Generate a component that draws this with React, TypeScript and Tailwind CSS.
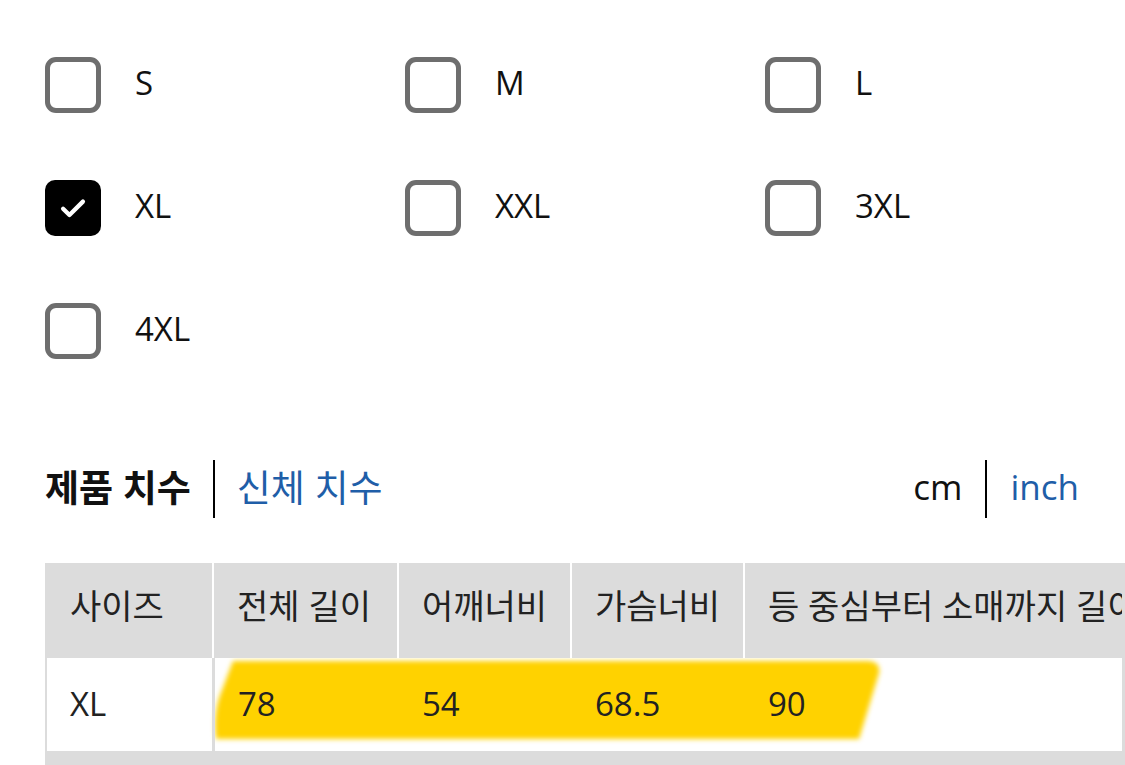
import React from 'react';

const sizes = [
  { label: 'S', checked: false },
  { label: 'M', checked: false },
  { label: 'L', checked: false },
  { label: 'XL', checked: true },
  { label: 'XXL', checked: false },
  { label: '3XL', checked: false },
  { label: '4XL', checked: false },
];

const columns = [
  { title: '사이즈', value: 'XL', width: 'w-[165px]' },
  { title: '전체 길이', value: '78', width: 'w-[185px]' },
  { title: '어깨너비', value: '54', width: 'w-[173px]' },
  { title: '가슴너비', value: '68.5', width: 'w-[173px]' },
  { title: '등 중심부터 소매까지 길이', value: '90', width: 'w-[460px]' },
];

function Checkbox({ checked }: { checked: boolean }) {
  if (checked) {
    return (
      <div className="w-[56px] h-[56px] rounded-[10px] bg-black flex items-center justify-center shrink-0">
        <svg width="34" height="34" viewBox="0 0 24 24" fill="none">
          <path d="M5 12.5l4.5 4.5 9.5-9.5" stroke="white" strokeWidth="3" strokeLinecap="round" strokeLinejoin="round" />
        </svg>
      </div>
    );
  }
  return <div className="w-[56px] h-[56px] rounded-[11px] border-[5px] border-[#6e6e6e] bg-white shrink-0" />;
}

export default function App() {
  return (
    <div
      className="w-[1125px] h-[765px] overflow-hidden bg-white text-[#111]"
      style={{ fontFamily: '"Open Sans", "Noto Sans CJK KR", sans-serif' }}
    >
      {/* Size options */}
      <div className="grid grid-cols-[360px_360px_360px] gap-y-[67px] pl-[45px] pt-[57px]">
        {sizes.map((s) => (
          <div key={s.label} className="flex items-center gap-[34px] h-[56px]">
            <Checkbox checked={s.checked} />
            <span className="text-[33px] leading-none -mt-[6px]">{s.label}</span>
          </div>
        ))}
      </div>

      {/* Tabs */}
      <div className="flex items-center justify-between pl-[45px] pr-[46px] mt-[101px] h-[58px]">
        <div className="flex items-center">
          <span className="text-[37px] font-bold leading-none -mt-[4px]">제품 치수</span>
          <span className="w-[2px] h-[58px] bg-black mx-[22px]" />
          <span className="text-[37px] leading-none text-[#1f5ea8] -mt-[4px]">신체 치수</span>
        </div>
        <div className="flex items-center">
          <span className="text-[35px] leading-none -mt-[6px]">cm</span>
          <span className="w-[2px] h-[58px] bg-black mx-[23px]" />
          <span className="text-[35px] leading-none text-[#1f5ea8] -mt-[6px]">inch</span>
        </div>
      </div>

      {/* Size table */}
      <div className="ml-[45px] mt-[45px] bg-[#dcdcdc] pl-[2px] pr-[3px] h-[210px]">
        <div className="overflow-hidden">
          <div className="flex w-[1300px] h-[95px]">
            {columns.map((c, i) => (
              <div
                key={c.title}
                className={`${c.width} shrink-0 flex items-center pl-[23px] text-[34px] text-[#222] whitespace-nowrap ${i > 0 ? 'border-l-2 border-white' : ''}`}
              >
                <span className="-mt-[8px]">{c.title}</span>
              </div>
            ))}
          </div>
          <div className="relative flex w-[1300px] h-[93px] bg-white">
            <svg className="absolute left-0 top-0" width="900" height="93" viewBox="0 0 900 93">
              <defs>
                <filter id="blur" x="-5%" y="-20%" width="110%" height="140%">
                  <feGaussianBlur stdDeviation="2.6" />
                </filter>
              </defs>
              <path
                d="M186 3 L822 3 Q834 4 832 15 L812 81 L169 81 Q166 60 172 40 Z"
                fill="#ffd200"
                filter="url(#blur)"
              />
            </svg>
            {columns.map((c, i) => (
              <div
                key={c.title}
                className={`${c.width} relative shrink-0 flex items-center pl-[23px] text-[33px] text-[#222] ${i === 1 ? 'border-l-[3px] border-[#dcdcdc]' : i > 1 ? 'border-l-2 border-transparent' : ''}`}
              >
                <span className="-mt-[2px]">{c.value}</span>
              </div>
            ))}
          </div>
        </div>
      </div>
    </div>
  );
}
